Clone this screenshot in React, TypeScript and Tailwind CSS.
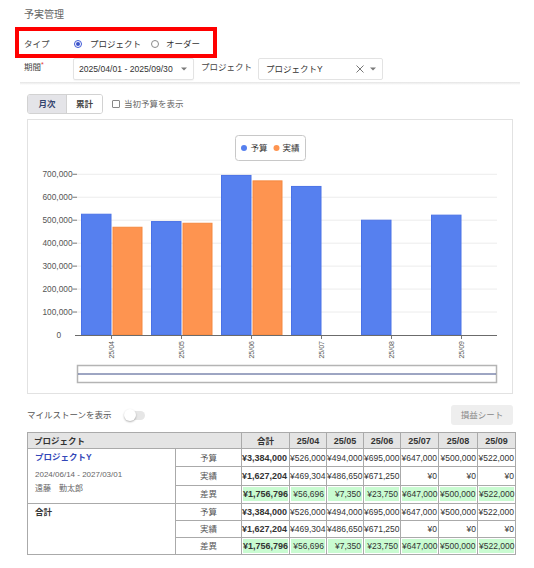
import React from "react";

const months = ["25/04", "25/05", "25/06", "25/07", "25/08", "25/09"];
const budget = [526000, 494000, 695000, 647000, 500000, 522000];
const actual = [469304, 486650, 671250, 0, 0, 0];

const yen = (n: number) => `¥${n.toLocaleString("en-US")}`;

const rows = [
  { label: "予算", total: 3384000, values: budget, diff: false },
  { label: "実績", total: 1627204, values: actual, diff: false },
  { label: "差異", total: 1756796, values: budget.map((b, i) => b - actual[i]), diff: true },
];

function Caret() {
  return (
    <svg width="6" height="4" viewBox="0 0 6 4">
      <path d="M0 0.5 L6 0.5 L3 3.5 Z" fill="#7a7a7a" />
    </svg>
  );
}

function Chart() {
  const y0 = 336;
  const scale = 22.96 / 100000;
  const ticks = [0, 100000, 200000, 300000, 400000, 500000, 600000, 700000];
  return (
    <svg width="484" height="273" viewBox="28 121 484 273" className="block">
      <rect x="235.5" y="136.5" width="70" height="25" rx="3" fill="#fff" stroke="#c8c8c8" />
      <circle cx="244" cy="149" r="3" fill="#5680ef" />
      <text x="250.5" y="152" fontSize="8.5" fill="#333">予算</text>
      <circle cx="276.5" cy="149" r="3" fill="#fe9450" />
      <text x="282.5" y="152" fontSize="8.5" fill="#333">実績</text>

      {ticks.map((t) => {
        const y = y0 - t * scale;
        return (
          <g key={t}>
            {t > 0 && <line x1="77" x2="497" y1={y} y2={y} stroke="#ececec" strokeWidth="1" />}
            {t > 0 && <line x1="72.5" x2="77" y1={y} y2={y} stroke="#777" strokeWidth="1" />}
            <text
              x={t === 0 ? 61 : 72.5}
              y={y + 3}
              fontSize="8.3"
              fill="#555"
              textAnchor="end"
            >
              {t === 0 ? "0" : t.toLocaleString("en-US")}
            </text>
          </g>
        );
      })}

      {months.map((m, i) => {
        const gs = 77 + i * 70;
        const bh = budget[i] * scale;
        const ah = actual[i] * scale;
        const cx = gs + 34.5;
        return (
          <g key={m}>
            <rect x={gs + 4.5} y={y0 - bh} width="29.5" height={bh} fill="#5680ef" stroke="#4a72e6" strokeWidth="1" />
            {ah > 0 && (
              <rect x={gs + 36} y={y0 - ah} width="29" height={ah} fill="#fe9450" stroke="#f5883f" strokeWidth="1" />
            )}
            <line x1={cx} x2={cx} y1={y0} y2={y0 + 4} stroke="#777" strokeWidth="1" />
            <text
              x={cx + 2.5}
              y={342}
              fontSize="7"
              fill="#555"
              textAnchor="end"
              transform={`rotate(-90 ${cx + 2.5} 342)`}
            >
              {m}
            </text>
          </g>
        );
      })}

      <line x1="75" x2="497" y1={y0 + 0.5} y2={y0 + 0.5} stroke="#6b6b6b" strokeWidth="1" />

      <rect x="77.5" y="366.5" width="419" height="17" fill="#fff" stroke="#b4b4b4" strokeWidth="1.5" />
      <line x1="78" x2="496" y1="375" y2="375" stroke="#3c4c86" strokeWidth="1" />
    </svg>
  );
}

export default function App() {
  return (
    <div className="relative h-[568px] w-[534px] overflow-hidden bg-white font-['Liberation_Sans','Noto_Sans_CJK_JP',sans-serif] text-[#333]">
      <div className="h-[27px] pl-[24px] pt-[9px] text-[10px] leading-[12px] text-[#666]">予実管理</div>

      <div className="ml-[15px] flex h-[31px] w-[202px] items-center border-4 border-[#ff0000] pl-[5px] pt-[2px] text-[8.5px] leading-[10px]">
        <span className="w-[50px] text-[#444]">タイプ</span>
        <span className="flex h-[8px] w-[8px] items-center justify-center rounded-full border border-[#3d57d6]">
          <span className="h-[4px] w-[4px] rounded-full bg-[#3a52c9]" />
        </span>
        <span className="ml-[8px] text-[#333]">プロジェクト</span>
        <span className="ml-[10px] h-[8px] w-[8px] rounded-full border border-[#8a8a8a]" />
        <span className="ml-[7px] text-[#333]">オーダー</span>
      </div>

      <div className="flex h-[22px] text-[8.5px] leading-[10px]">
        <div className="w-[73px] pl-[24px] pt-[4px] text-[#444]">
          期間<span className="relative -top-[3px] text-[7px] text-[#e53935]">*</span>
        </div>
        <div className="flex h-[22px] w-[121px] items-center justify-between rounded-[2px] border border-[#e3e3e3] pl-[5px] pr-[6px] shadow-[0_1px_1px_rgba(0,0,0,0.04)]">
          <span className="text-[8.6px] text-[#333]">2025/04/01 - 2025/09/30</span>
          <Caret />
        </div>
        <div className="w-[64px] pl-[7px] pt-[4px] text-[#444]">プロジェクト</div>
        <div className="flex h-[22px] w-[125px] items-center rounded-[2px] border border-[#e3e3e3] pl-[7px] pr-[6px]">
          <span className="flex-1 text-[#333]">プロジェクトY</span>
          <svg width="8" height="8" viewBox="0 0 8 8" className="mr-[6px]">
            <path d="M0.5 0.5 L7.5 7.5 M7.5 0.5 L0.5 7.5" stroke="#777" strokeWidth="1" />
          </svg>
          <Caret />
        </div>
      </div>

      <div className="ml-[20px] mt-[2px] h-[3px] w-[500px] bg-linear-to-b from-[#e4e4e4] to-white" />

      <div className="ml-[27px] mt-[9px] flex h-[20px] items-center text-[8.5px]">
        <div className="flex h-[20px] overflow-hidden rounded-[3px] border border-[#d2d2d2]">
          <div className="flex w-[38px] items-center justify-center bg-[#e4e4e8] font-bold text-[#34456e]">月次</div>
          <div className="flex w-[36px] items-center justify-center border-l border-[#d2d2d2] bg-white font-bold text-[#444]">累計</div>
        </div>
        <span className="ml-[9px] h-[8px] w-[8px] rounded-[1px] border border-[#888]" />
        <span className="ml-[4px] text-[#666]">当初予算を表示</span>
      </div>

      <div className="ml-[27px] mt-[5px] h-[275px] w-[486px] border border-[#e2e2e2]">
        <Chart />
      </div>

      <div className="ml-[27px] mt-[11px] flex h-[20px] w-[486px] items-center justify-between text-[8.5px]">
        <div className="flex items-center">
          <span className="text-[#555]">マイルストーンを表示</span>
          <span className="relative ml-[13px] h-[9px] w-[20px] rounded-full bg-[#e6e6e6]">
            <span className="absolute -left-[1px] -top-[2px] h-[12px] w-[12px] rounded-full bg-white shadow-[0_1px_2px_rgba(0,0,0,0.3)]" />
          </span>
        </div>
        <div className="flex h-[20px] w-[62px] items-center justify-center rounded-[3px] bg-[#eeeeee] text-[#888]">損益シート</div>
      </div>

      <table className="ml-[27px] mt-[7px] w-[488px] table-fixed border-collapse border border-[#9a9a9a] text-[8.5px] leading-[10px]">
        <colgroup>
          <col className="w-[148px]" />
          <col className="w-[66px]" />
          <col className="w-[48px]" />
          <col className="w-[37px]" />
          <col className="w-[37px]" />
          <col className="w-[37px]" />
          <col className="w-[38px]" />
          <col className="w-[39px]" />
          <col className="w-[38px]" />
        </colgroup>
        <thead>
          <tr className="h-[16px] bg-[#e4e4e4]">
            <th colSpan={2} className="border border-[#aaa] pl-[6px] text-left text-[8.5px] font-bold">プロジェクト</th>
            <th className="border border-[#aaa] text-center text-[8.5px] font-bold">合計</th>
            {months.map((m) => (
              <th key={m} className="border border-[#aaa] text-center text-[9px] font-bold">{m}</th>
            ))}
          </tr>
        </thead>
        <tbody>
          {[0, 1].map((g) =>
            rows.map((r, ri) => (
              <tr key={`${g}-${ri}`} className={g === 0 ? "h-[18.3px]" : "h-[17px]"}>
                {ri === 0 && (
                  <td rowSpan={3} className="border border-[#aaa] pl-[7px] pt-[2px] align-top">
                    {g === 0 ? (
                      <div>
                        <div className="text-[8.5px] font-bold leading-[12px] text-[#3347b8]">プロジェクトY</div>
                        <div className="mt-[7px] text-[8px] leading-[10px] text-[#666]">2024/06/14 - 2027/03/01</div>
                        <div className="mt-[4px] text-[8px] leading-[10px] text-[#666]">遠藤　勤太郎</div>
                      </div>
                    ) : (
                      <div className="text-[8.5px] font-bold leading-[12px] text-[#333]">合計</div>
                    )}
                  </td>
                )}
                <td className="border border-[#aaa] text-center text-[#555]">{r.label}</td>
                <td className={`border border-[#aaa] text-right text-[9px] font-bold ${r.diff ? "p-[1px]" : "pr-[2px]"}`}>
                  {r.diff ? (
                    <div className="bg-[#c9fbd1] pr-[1px] leading-[14px]">{yen(r.total)}</div>
                  ) : (
                    yen(r.total)
                  )}
                </td>
                {r.values.map((v, i) => (
                  <td key={i} className={`border border-[#aaa] text-right ${r.diff ? "p-[1px]" : "pr-[1px]"}`}>
                    {r.diff ? <div className="bg-[#c9fbd1] pr-[1px] leading-[14px]">{yen(v)}</div> : yen(v)}
                  </td>
                ))}
              </tr>
            ))
          )}
        </tbody>
      </table>
    </div>
  );
}
